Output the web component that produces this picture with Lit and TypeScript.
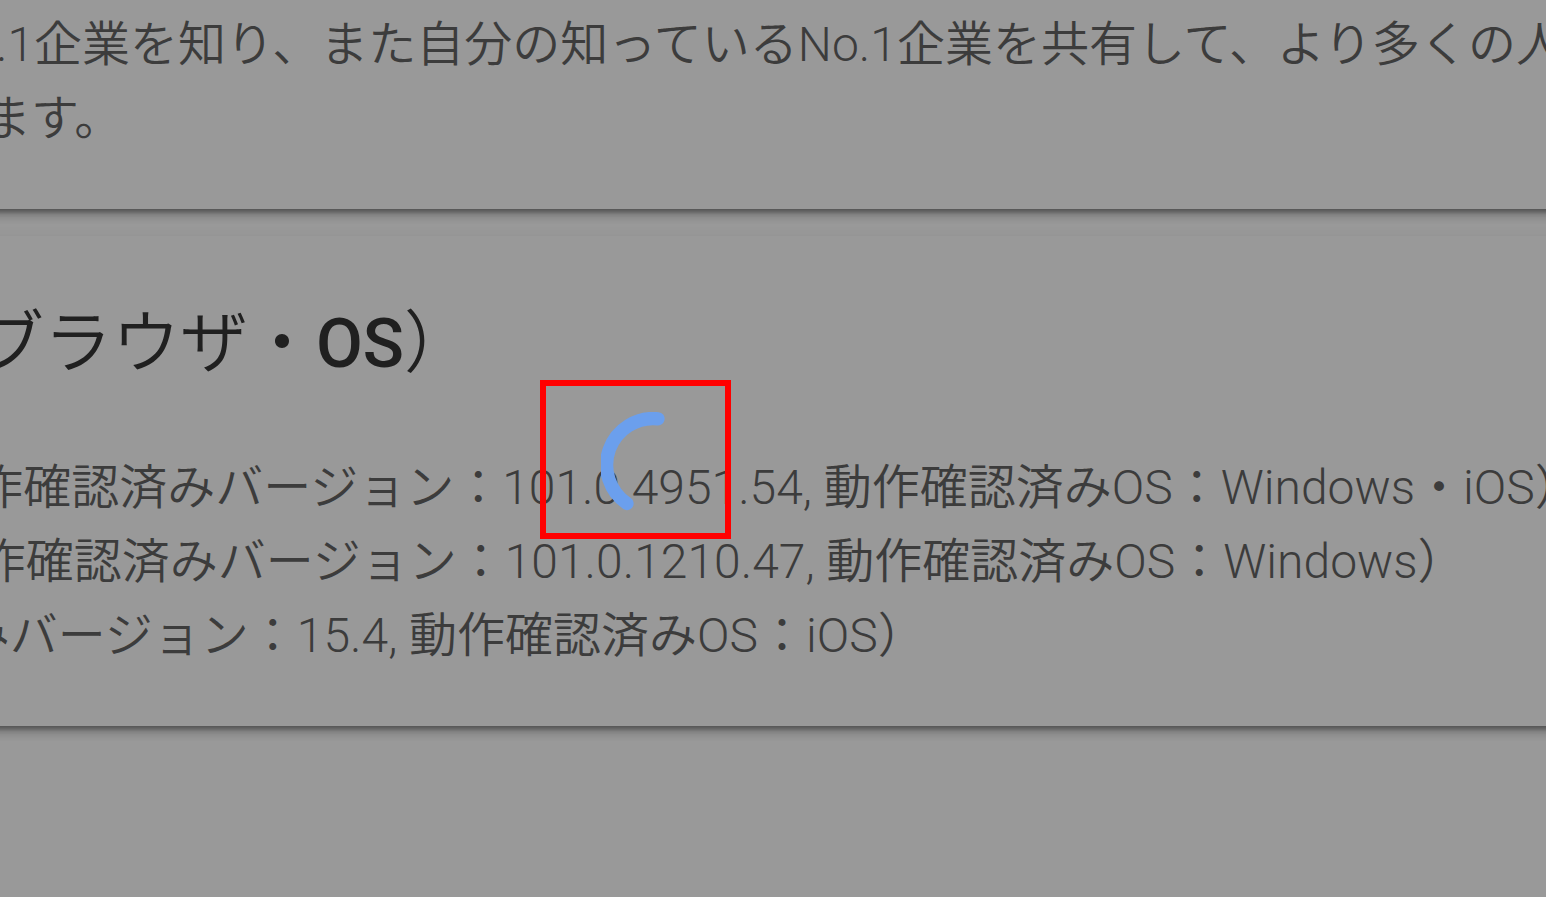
import { LitElement, html, css } from "lit";
import { customElement } from "lit/decorators.js";

@customElement("loading-ring")
class LoadingRing extends LitElement {
  static styles = css`
    :host { display: block; }
    svg { display: block; width: 106px; height: 106px; }
  `;
  render() {
    return html`<svg viewBox="0 0 106 106" role="img" aria-label="読み込み中">
      <path d="M57 6.8A46.5 46.5 0 0 0 26 91.5" fill="none" stroke="#6b9fed" stroke-width="13.3" stroke-linecap="round" />
    </svg>`;
  }
}

@customElement("app-root")
class AppRoot extends LitElement {
  static styles = css`
    :host {
      display: block;
      position: relative;
      min-height: 100vh;
      overflow: hidden;
      background: #999;
      color: #3c3c3c;
      font: 350 48px/74px Roboto, "Noto Sans CJK JP", sans-serif;
    }
    main { display: flex; flex-direction: column; gap: 27px; margin: 0 -40px; }
    .card {
      padding: 53px 40px;
      background: #999;
      box-shadow: 0 10px 4px -7px rgba(0, 0, 0, 0.3), 0 7px 8px rgba(0, 0, 0, 0.18), 0 3px 16px rgba(0, 0, 0, 0.06);
    }
    .intro { padding-top: 8px; }
    .last { box-shadow: none; min-height: 40px; }
    .text { margin: 0 0 0 -449px; white-space: nowrap; }
    .title {
      margin: 0 0 52px -364px;
      color: #202020;
      font-size: 68px;
      line-height: 110px;
      font-weight: 350;
      white-space: nowrap;
    }
    .latin { font-weight: 500; }
    .frame {
      position: absolute;
      left: 540px;
      top: 380px;
      box-sizing: border-box;
      width: 191px;
      height: 159px;
      border: 6px solid #f00;
      padding: 26px 0 0 55px;
    }
  `;
  render() {
    return html`
      <main>
        <section class="card intro">
          <p class="text">さまざまな分野のNo.1企業を知り、また自分の知っているNo.1企業を共有して、より多くの人<br />に広めることができます。</p>
        </section>
        <section class="card">
          <h2 class="title">推奨環境（ブラウザ・<span class="latin">OS</span>）</h2>
          <p class="text">Google Chrome（動作確認済みバージョン：101.0.4951.54, 動作確認済みOS：Windows・iOS）<br />Microsoft Edge （動作確認済みバージョン：101.0.1210.47, 動作確認済みOS：Windows）<br />Safari（動作確認済みバージョン：15.4, 動作確認済みOS：iOS）</p>
        </section>
        <section class="card last"></section>
      </main>
      <div class="frame"><loading-ring></loading-ring></div>
    `;
  }
}
